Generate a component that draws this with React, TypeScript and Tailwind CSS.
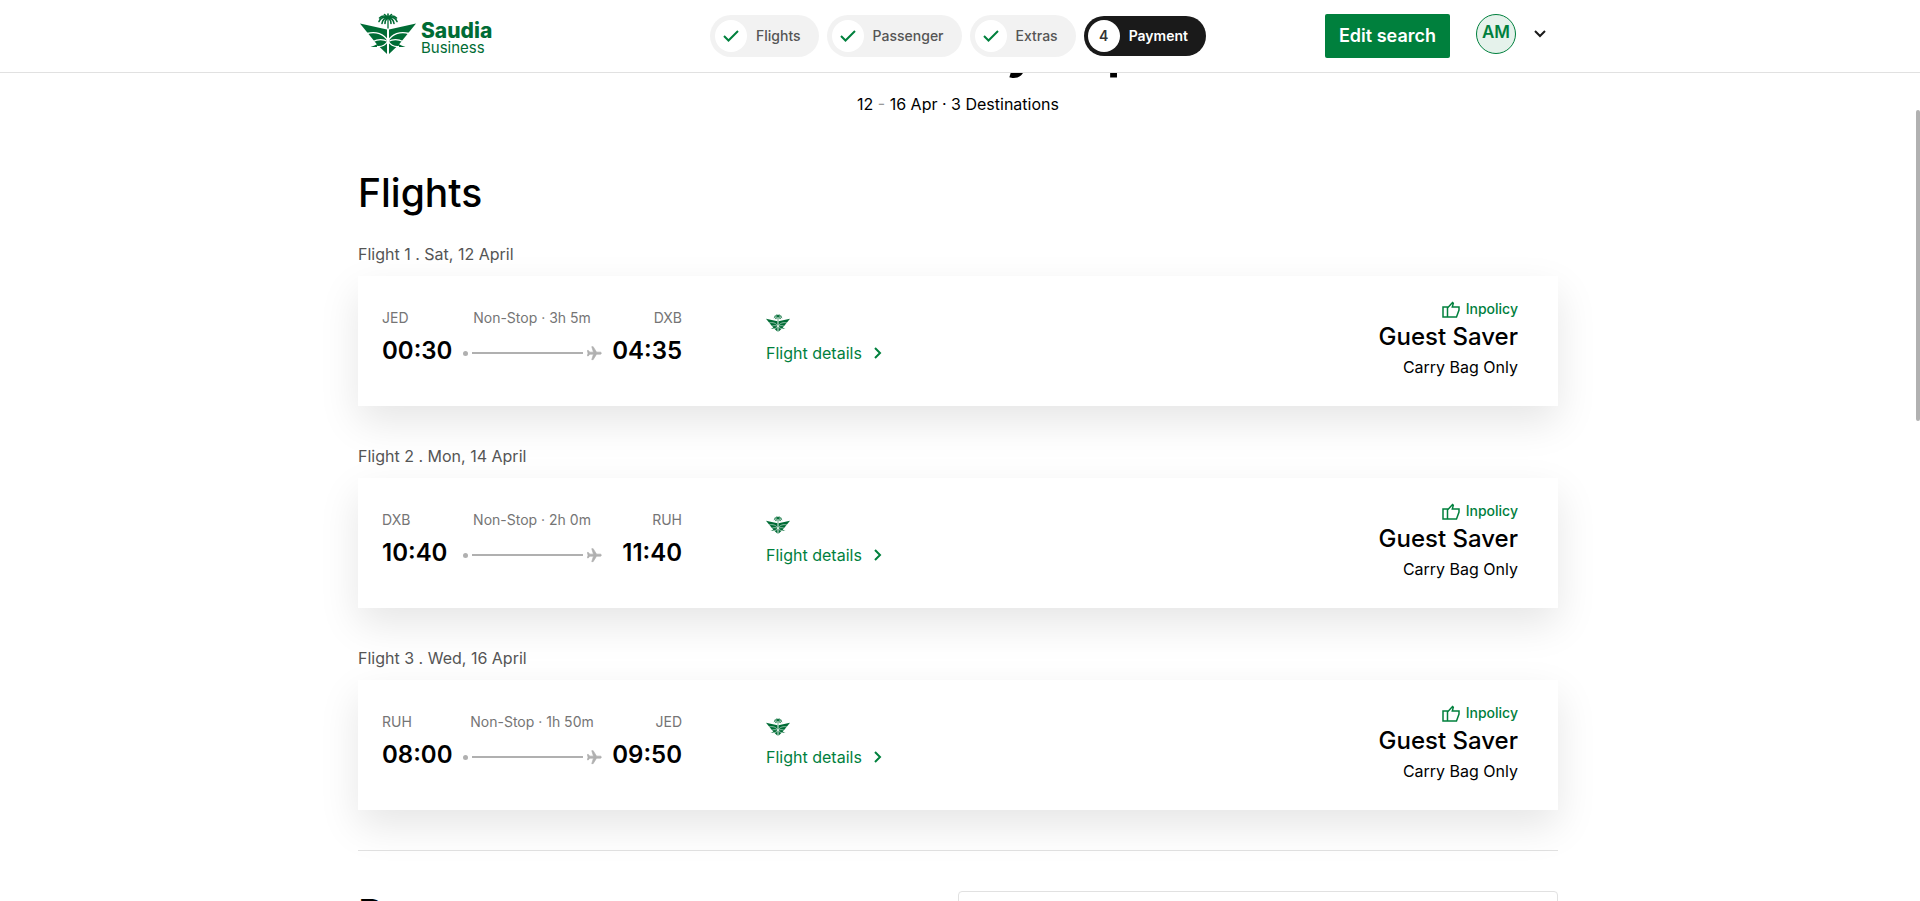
import React from "react";

function Emblem({ className }: { className?: string }) {
  return (
    <svg viewBox="0 0 56 41" className={className} aria-hidden="true">
      <g fill="currentColor">
        <path d="M0 10.500L27 16.500V41L17 31.500z" />
        <path d="M56 10.500L29 16.500V41L39 31.500z" />
        <path d="M10.500 33.500c3 0 5-1.500 8-3l3 2.200c-3.500 1.300-7.500 1.800-11 .8z" />
        <path d="M45.500 33.500c-3 0-5-1.500-8-3l-3 2.200c3.500 1.300 7.500 1.800 11 .8z" />
      </g>
      <g fill="none" stroke="#fff" strokeWidth="1.300">
        <path d="M7 20.500c9-2.500 17 .5 21 7.500 2.500 4 6 6 11 5.500" />
        <path d="M49 20.500c-9-2.500-17 .5-21 7.500-2.500 4-6 6-11 5.500" />
        <path d="M13 28.500c5-2.500 10-2.500 15 0M43 28.500c-5-2.500-10-2.500-15 0" />
      </g>
      <g fill="none" stroke="currentColor" strokeWidth="1.600" strokeLinecap="round">
        <path d="M28 4v11" strokeWidth="1.300" />
        <path d="M28 4.500V1M28 4.500L24.500 1.500M28 4.500l3.500-3" />
        <path d="M28 4.500c-3-2-6-2-8.500.5M28 4.500c3-2 6-2 8.500.5" />
        <path d="M28 4.500c-4-1-7.500.5-9 4M28 4.500c4-1 7.500.5 9 4" />
        <path d="M28 4.500c-3.500.5-5.500 2.500-6 6M28 4.500c3.500.5 5.500 2.500 6 6" />
        <path d="M28 4.500c-2 1.500-3 3.500-3 6M28 4.500c2 1.500 3 3.500 3 6" />
      </g>
    </svg>
  );
}

function Plane() {
  return (
    <svg viewBox="1 1 22 22" className="h-[15px] w-[15px] text-[#b0b0b0]" fill="currentColor" stroke="currentColor" aria-hidden="true">
      <path
        transform="rotate(90 12 12)"
        d="M21 16v-2l-8-5V3.500c0-.83-.67-1.500-1.500-1.500S10 2.670 10 3.500V9l-8 5v2l8-2.500V19l-2.500 2V22.500l4-1 4 1V21L13 19v-5.500l8 2.500z"
      />
    </svg>
  );
}

function Check() {
  return (
    <svg viewBox="0 0 16 12" className="h-3 w-4" fill="none" stroke="#00803d" strokeWidth="2" aria-hidden="true">
      <path d="M1 6l4.500 4.500L15 1" />
    </svg>
  );
}

function ThumbUp() {
  return (
    <svg viewBox="0 0 18 17" className="h-[17px] w-[18px]" fill="none" stroke="currentColor" strokeWidth="1.500" aria-hidden="true">
      <path d="M1 6h4.500v10H1zM5.500 7l5-5.500.8.800L10.300 6H17v3l-2.500 7h-9" />
    </svg>
  );
}

const doneSteps = ["Flights", "Passenger", "Extras"];

const flights = [
  { label: "Flight 1 . Sat, 12 April", from: "JED", to: "DXB", dep: "00:30", arr: "04:35", stop: "Non-Stop · 3h 5m" },
  { label: "Flight 2 . Mon, 14 April", from: "DXB", to: "RUH", dep: "10:40", arr: "11:40", stop: "Non-Stop · 2h 0m" },
  { label: "Flight 3 . Wed, 16 April", from: "RUH", to: "JED", dep: "08:00", arr: "09:50", stop: "Non-Stop · 1h 50m" },
];

function Header() {
  return (
    <header className="sticky top-0 z-10 border-b border-[#e1e1e1] bg-white pr-1">
      <div className="mx-auto flex h-[72px] max-w-[1200px] items-center justify-between">
        <div className="flex flex-1">
          <a href="#" className="flex items-start gap-[5px] pb-1 pl-0.5 text-[#006c35]">
            <Emblem className="h-[41px] w-14" />
            <span className="flex flex-col pt-[9px]">
              <span className="text-[21px] leading-[18px] font-extrabold">Saudia</span>
              <span className="text-[15px] leading-4">Business</span>
            </span>
          </a>
        </div>
        <nav aria-label="Booking steps" className="flex items-center gap-2 text-sm font-medium">
          {doneSteps.map((step) => (
            <a key={step} href="#" className="flex h-[42px] items-center gap-[9px] rounded-full bg-[#f2f2f2] pr-[18px] pl-[5px] text-[#555]">
              <span className="flex h-8 w-8 items-center justify-center rounded-full bg-white">
                <Check />
              </span>
              {step}
            </a>
          ))}
          <a href="#" aria-current="step" className="flex h-10 items-center gap-[9px] rounded-full bg-[#1a1a1a] pr-[18px] pl-1 font-semibold text-white">
            <span className="flex h-8 w-8 items-center justify-center rounded-full bg-white text-[#333]">4</span>
            Payment
          </a>
        </nav>
        <div className="flex flex-1 items-center justify-end">
          <button type="button" className="h-11 rounded-xs bg-[#00803d] px-3.5 text-lg font-semibold text-white">
            Edit search
          </button>
          <button type="button" aria-label="Account menu" className="mr-3 ml-[26px] flex items-center gap-[18px] pb-1">
            <span className="flex h-10 w-10 items-center justify-center rounded-full border border-[#00803d] bg-[#e5f2eb] pb-1 text-[17px] leading-6 font-semibold text-[#00803d]">
              AM
            </span>
            <svg viewBox="0 0 12 8" className="h-2 w-3" fill="none" stroke="#1a1a1a" strokeWidth="2" aria-hidden="true">
              <path d="M1 1l5 5 5-5" />
            </svg>
          </button>
        </div>
      </div>
    </header>
  );
}

function FlightCard({ flight }: { flight: (typeof flights)[number] }) {
  return (
    <section>
      <h3 className="text-base leading-6 text-[#555]">{flight.label}</h3>
      <div className="mt-[10px] flex h-[130px] bg-white pt-[23px] pr-10 pl-6 shadow-[0_16px_38px_rgba(0,0,0,0.1)]">
        <div className="w-[300px] pt-[9px]">
          <div className="grid grid-cols-[1fr_auto_1fr] text-sm leading-5 text-[#757575]">
            <span>{flight.from}</span>
            <span>{flight.stop}</span>
            <span className="text-right">{flight.to}</span>
          </div>
          <div className="mt-[5px] grid grid-cols-[80px_1fr_80px] items-center text-2xl leading-9 font-semibold">
            <span>{flight.dep}</span>
            <span className="flex items-center pt-1 pl-px">
              <span className="h-[5px] w-[5px] rounded-full bg-[#b0b0b0]" />
              <span className="mx-1 h-0.5 flex-1 bg-[#b0b0b0]" />
              <Plane />
            </span>
            <span className="text-right">{flight.arr}</span>
          </div>
        </div>
        <div className="ml-21 pt-[15px] text-[#00803d]">
          <Emblem className="h-[18px] w-6 text-[#006c35]" />
          <a href="#" className="mt-[9px] flex items-center gap-3 leading-6">
            Flight details
            <svg viewBox="0 0 8 12" className="h-3 w-2" fill="none" stroke="currentColor" strokeWidth="2" aria-hidden="true">
              <path d="M1 1l5 5-5 5" />
            </svg>
          </a>
        </div>
        <div className="ml-auto text-right">
          <p className="flex items-center justify-end gap-1.5 text-sm leading-5 font-medium text-[#00803d]">
            <ThumbUp />
            Inpolicy
          </p>
          <p className="text-2xl leading-9 font-medium">Guest Saver</p>
          <p className="text-base leading-6">Carry Bag Only</p>
        </div>
      </div>
    </section>
  );
}

export default function App() {
  return (
    <div className="h-screen overflow-hidden bg-white font-['Inter','Liberation_Sans',sans-serif] text-black">
      <Header />
      <main className="pr-1">
        <div className="mx-auto max-w-[1200px]">
          <div className="-mt-[60px] text-center">
            <h1 className="text-[54px] leading-[70px] font-semibold">Multi-City trip</h1>
            <p className="mt-[9px] text-base leading-6">
              12 <span className="text-[#999]">-</span> 16 Apr · 3 Destinations
            </p>
          </div>
          <h2 className="mt-[47px] text-[39px] leading-[60px] font-medium">Flights</h2>
          <div className="mt-[19px] flex flex-col gap-[38px]">
            {flights.map((flight) => (
              <FlightCard key={flight.label} flight={flight} />
            ))}
          </div>
          <div className="mt-10 flex justify-between border-t border-[#e1e1e1] pt-10">
            <h2 className="text-[39px] leading-[46px] font-medium">Payment</h2>
            <div className="h-40 w-1/2 rounded-sm border border-[#e1e1e1]" />
          </div>
        </div>
      </main>
      <div className="fixed top-[110px] right-0 h-[311px] w-1 rounded-full bg-[#b1b1b1]" />
    </div>
  );
}
